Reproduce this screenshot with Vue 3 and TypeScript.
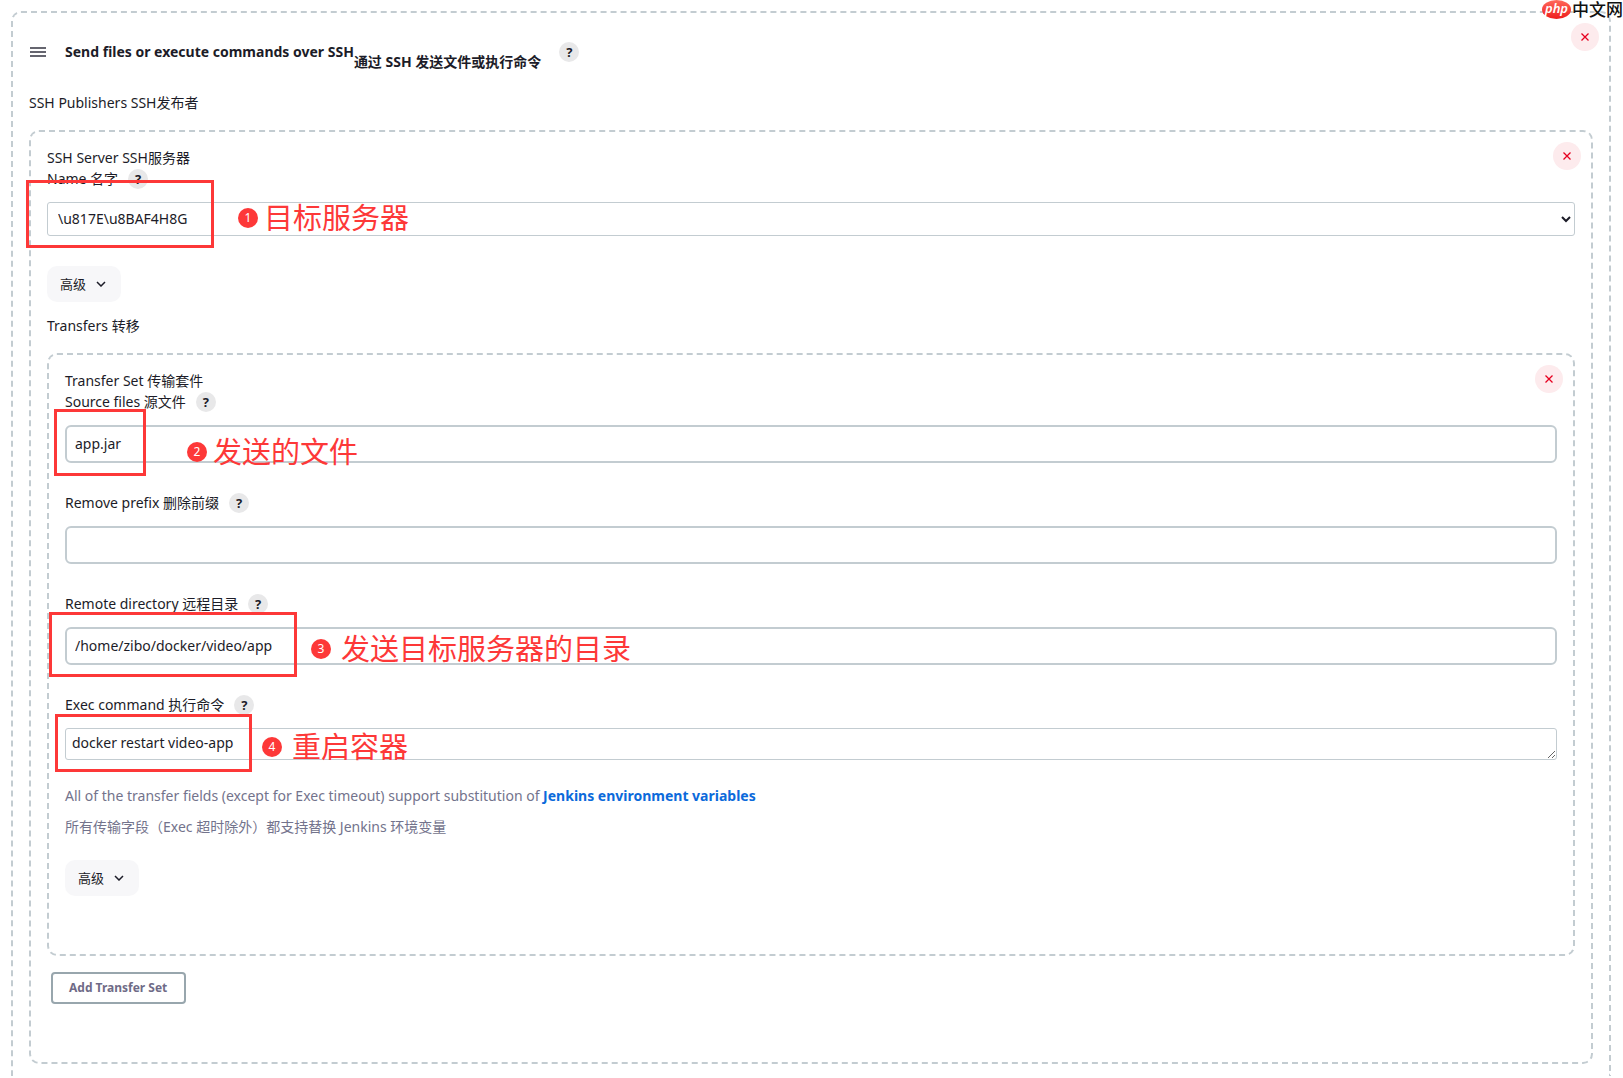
<script setup lang="ts">
import { ref } from 'vue'

const server = ref('\\u817E\\u8BAF4H8G')
const sourceFiles = ref('app.jar')
const removePrefix = ref('')
const remoteDirectory = ref('/home/zibo/docker/video/app')
const execCommand = ref('docker restart video-app')
</script>

<template>
  <main class="page">
    <div class="watermark" aria-hidden="true">
      <span class="watermark-php">php</span>
      <span class="watermark-name">中文网</span>
    </div>

    <section class="chunk chunk-step">
      <button class="remove" type="button" aria-label="Delete">
        <svg viewBox="0 0 10 10"><path d="M1.5 1.5l7 7M8.5 1.5l-7 7" /></svg>
      </button>
      <header class="step-head">
        <svg class="grip" viewBox="0 0 16 10"><path d="M0 1h16M0 5h16M0 9h16" /></svg>
        <h2 class="title">Send files or execute commands over SSH<span class="title-zh">通过 SSH 发送文件或执行命令</span></h2>
        <button class="help" type="button" aria-label="Help">?</button>
      </header>
      <div class="caption">SSH Publishers SSH发布者</div>

      <section class="chunk chunk-server">
        <button class="remove" type="button" aria-label="Delete">
          <svg viewBox="0 0 10 10"><path d="M1.5 1.5l7 7M8.5 1.5l-7 7" /></svg>
        </button>
        <div class="set-name">SSH Server SSH服务器</div>
        <div class="field field-server">
          <div class="label-row">
            <label for="server">Name 名字</label>
            <button class="help" type="button" aria-label="Help">?</button>
          </div>
          <select id="server" v-model="server" class="select">
            <option>\u817E\u8BAF4H8G</option>
          </select>
          <div class="mark mark-server"></div>
          <div class="note note-server"><b class="dot">1</b><span>目标服务器</span></div>
        </div>
        <button class="advanced" type="button">
          高级
          <svg viewBox="0 0 10 6"><path d="M1 1l4 4 4-4" /></svg>
        </button>
        <div class="caption caption-transfers">Transfers 转移</div>

        <section class="chunk chunk-transfer">
          <button class="remove" type="button" aria-label="Delete">
            <svg viewBox="0 0 10 10"><path d="M1.5 1.5l7 7M8.5 1.5l-7 7" /></svg>
          </button>
          <div class="set-name">Transfer Set 传输套件</div>
          <div class="field">
            <div class="label-row">
              <label for="source">Source files 源文件</label>
              <button class="help" type="button" aria-label="Help">?</button>
            </div>
            <input id="source" v-model="sourceFiles" class="input" type="text" />
            <div class="mark mark-source"></div>
            <div class="note note-source"><b class="dot">2</b><span>发送的文件</span></div>
          </div>
          <div class="field">
            <div class="label-row">
              <label for="prefix">Remove prefix 删除前缀</label>
              <button class="help" type="button" aria-label="Help">?</button>
            </div>
            <input id="prefix" v-model="removePrefix" class="input" type="text" />
          </div>
          <div class="field">
            <div class="label-row">
              <label for="remote">Remote directory 远程目录</label>
              <button class="help" type="button" aria-label="Help">?</button>
            </div>
            <input id="remote" v-model="remoteDirectory" class="input" type="text" />
            <div class="mark mark-remote"></div>
            <div class="note note-remote"><b class="dot">3</b><span>发送目标服务器的目录</span></div>
          </div>
          <div class="field">
            <div class="label-row">
              <label for="exec">Exec command 执行命令</label>
              <button class="help" type="button" aria-label="Help">?</button>
            </div>
            <textarea id="exec" v-model="execCommand" class="textarea" rows="1"></textarea>
            <div class="mark mark-exec"></div>
            <div class="note note-exec"><b class="dot">4</b><span>重启容器</span></div>
          </div>
          <div class="description">
            <p>All of the transfer fields (except for Exec timeout) support substitution of <a href="#">Jenkins environment variables</a></p>
            <p>所有传输字段（Exec 超时除外）都支持替换 Jenkins 环境变量</p>
          </div>
          <button class="advanced" type="button">
            高级
            <svg viewBox="0 0 10 6"><path d="M1 1l4 4 4-4" /></svg>
          </button>
        </section>

        <button class="add" type="button">Add Transfer Set</button>
      </section>
    </section>
  </main>
</template>

<style>
body {
  background: #fff;
}
</style>

<style scoped>
.page {
  position: relative;
  padding: 11px 12px 0 11px;
  overflow: hidden;
  font-family: "Noto Sans", "Noto Sans CJK SC", sans-serif;
  font-size: 14px;
  line-height: 20px;
  color: #1c1c28;
}

.page * {
  box-sizing: border-box;
}

button,
input,
select,
textarea {
  margin: 0;
  font-family: inherit;
  line-height: 20px;
  color: inherit;
}

.chunk {
  position: relative;
  border: 2px dashed #c3ccd1;
  border-radius: 10px;
  padding: 16px;
}

.chunk-step {
  border-bottom: 0;
  border-bottom-left-radius: 0;
  border-bottom-right-radius: 0;
  padding-bottom: 12px;
}

.chunk-server,
.chunk-transfer {
  margin-top: 17px;
  padding-bottom: 58px;
}

.remove {
  position: absolute;
  top: 10px;
  right: 10px;
  width: 28px;
  height: 28px;
  display: flex;
  align-items: center;
  justify-content: center;
  padding: 0;
  border: 0;
  border-radius: 50%;
  background: #fdebed;
}

.remove svg {
  width: 10px;
  height: 10px;
  fill: none;
  stroke: #e6001f;
  stroke-width: 1.3;
}

.step-head {
  display: flex;
  align-items: center;
  height: 20px;
  margin-top: 13px;
}

.grip {
  width: 16px;
  height: 10px;
  margin: 0 19px 0 1px;
  stroke: #333340;
  stroke-width: 1.7;
}

.title {
  display: flex;
  margin: 0 18px 0 0;
  font-size: 14px;
  font-weight: 700;
}

.title-zh {
  padding-top: 10px;
  margin-bottom: -10px;
}

.help {
  flex: none;
  width: 20px;
  height: 20px;
  padding: 0;
  border: 0;
  border-radius: 50%;
  background: #e8e8e9;
  font-size: 13px;
  font-weight: 700;
  text-align: center;
}

.caption {
  margin-top: 31px;
}

.set-name {
  height: 21px;
}

.field {
  position: relative;
  margin-bottom: 30px;
}

.label-row {
  display: flex;
  align-items: center;
  gap: 10px;
  height: 20px;
  margin-bottom: 13px;
}

.select {
  display: block;
  width: 100%;
  height: 34px;
  padding: 0 7px 2px 6px;
  border: 1px solid #c3ccd1;
  border-radius: 3px;
  background: #fff;
  font-size: 14px;
}

.input {
  display: block;
  width: 100%;
  height: 38px;
  padding: 0 8px 2px;
  border: 2px solid #c3ccd1;
  border-radius: 6px;
  background: #fff;
  font-size: 14px;
}

.textarea {
  display: block;
  width: 100%;
  height: 32px;
  padding: 4px 6px 6px;
  border: 1px solid #c3ccd1;
  border-radius: 3px;
  background: #fff;
  font-size: 14px;
  overflow: hidden;
  resize: vertical;
}

.advanced {
  display: flex;
  align-items: center;
  gap: 10px;
  height: 36px;
  padding: 0 15px 0 13px;
  border: 0;
  border-radius: 10px;
  background: #f7f7f9;
  font-size: 13px;
}

.advanced svg {
  width: 10px;
  height: 6px;
  fill: none;
  stroke: currentColor;
  stroke-width: 1.5;
}

.caption-transfers {
  margin-top: 14px;
}

.description {
  margin: -4px 0 23px;
  color: #73738c;
}

.description p {
  margin: 0 0 11px;
}

.description a {
  color: #0b6adb;
  font-weight: 700;
  text-decoration: none;
}

.add {
  display: block;
  height: 32px;
  margin: 16px 0 0 4px;
  padding: 0 17px 0 16px;
  border: 2px solid #98a6ad;
  border-radius: 4px;
  background: #fff;
  font-size: 12px;
  font-weight: 700;
  color: #6f6b87;
}

/* Red annotations laid over the form */
.mark,
.note {
  position: absolute;
  pointer-events: none;
}

.mark {
  border: 3px solid #fd3838;
}

.mark-server {
  left: -21px;
  top: 11px;
  width: 188px;
  height: 68px;
}

.mark-source {
  left: -11px;
  top: 17px;
  width: 92px;
  height: 67px;
}

.mark-remote {
  left: -16px;
  top: 18px;
  width: 248px;
  height: 65px;
}

.mark-exec {
  left: -10px;
  top: 19px;
  width: 197px;
  height: 58px;
}

.note {
  display: flex;
  align-items: center;
  gap: 10px;
  font-size: 29px;
  line-height: 40px;
  white-space: nowrap;
  color: #fd3838;
}

.note-server {
  left: 191px;
  top: 29px;
  gap: 6px;
}

.note-source {
  left: 122px;
  top: 40px;
  gap: 6px;
}

.note-remote {
  left: 246px;
  top: 35px;
}

.note-exec {
  left: 197px;
  top: 32px;
}

.dot {
  width: 20px;
  height: 20px;
  border-radius: 50%;
  background: #fd3838;
  color: #fff;
  font-size: 12px;
  font-weight: 400;
  line-height: 20px;
  text-align: center;
}

.watermark {
  position: absolute;
  z-index: 1;
  top: 0;
  right: 0;
  display: flex;
  align-items: center;
  gap: 1px;
}

.watermark-php {
  width: 29px;
  height: 19px;
  border-radius: 50%;
  background: linear-gradient(#ff6a5c, #ee1c1c);
  color: #fff;
  font-size: 13px;
  font-style: italic;
  font-weight: 600;
  line-height: 16px;
  text-align: center;
}

.watermark-name {
  font-size: 17px;
  font-weight: 500;
  line-height: 19px;
  color: #111;
  text-shadow: 0 0 2px #fff, 0 0 2px #fff;
}
</style>
